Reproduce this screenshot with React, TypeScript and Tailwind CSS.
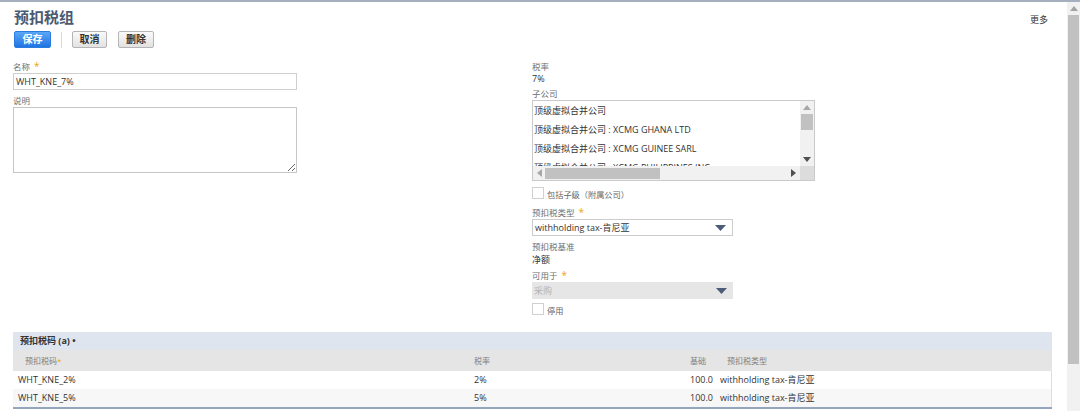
import React from 'react';

// 小工具组件
function Star() {
    return <span className="ml-[4px] text-[10px] leading-none text-[#f0a30a]">*</span>;
}

function Label({ children, req }: { children: React.ReactNode; req?: boolean }) {
    return (
        <div className="h-[12px] text-[8.5px] leading-[12px] text-[#707070]">
            {children}
            {req && <Star />}
        </div>
    );
}

function Arrow({ dir, color }: { dir: 'up' | 'down' | 'left' | 'right'; color: string }) {
    const pts = {
        up: '0,5 4,0 8,5',
        down: '0,0 8,0 4,5',
        left: '5,0 5,8 0,4',
        right: '0,0 0,8 5,4',
    }[dir];
    const w = dir === 'up' || dir === 'down' ? 8 : 5;
    const h = dir === 'up' || dir === 'down' ? 5 : 8;
    return (
        <svg width={w} height={h} viewBox={`0 0 ${w} ${h}`}>
            <polygon points={pts} fill={color} />
        </svg>
    );
}

function Checkbox({ label }: { label: string }) {
    return (
        <div className="flex items-end gap-[3px]">
            <div className="h-[12px] w-[12px] border border-[#d0d0d0] bg-white" />
            <span className="text-[8.2px] leading-[9px] text-[#666]">{label}</span>
        </div>
    );
}

function Select({ value, disabled }: { value: string; disabled?: boolean }) {
    return (
        <div
            className={`flex h-[17px] w-[201px] items-center justify-between pl-[2px] pr-[6px] text-[9px] ${
                disabled ? 'bg-[#e6e6e6] text-[#b3b3b3]' : 'border border-[#cccccc] bg-white text-[#333]'
            }`}
        >
            <span>{value}</span>
            <svg width="11" height="6" viewBox="0 0 11 6">
                <polygon points="0,0 11,0 5.5,6" fill="#4b5d78" />
            </svg>
        </div>
    );
}

export default function App() {
    const subs = [
        '顶级虚拟合并公司',
        '顶级虚拟合并公司 : XCMG GHANA LTD',
        '顶级虚拟合并公司 : XCMG GUINEE SARL',
        '顶级虚拟合并公司 : XCMG PHILIPPINES INC',
    ];

    const rows = [
        { code: 'WHT_KNE_2%', rate: '2%', base: '100.0', type: 'withholding tax-肯尼亚' },
        { code: 'WHT_KNE_5%', rate: '5%', base: '100.0', type: 'withholding tax-肯尼亚' },
    ];

    return (
        <div className="flex h-[411px] w-[1080px] overflow-hidden border-t-2 border-[#a5afc0] bg-white font-['Open_Sans','Noto_Sans_CJK_SC',sans-serif] text-[#333]">
            <div className="flex-1">
                {/* 标题 */}
                <div className="flex justify-between pl-[14px] pr-[19px] pt-[3px]">
                    <h1 className="h-[24px] text-[15px] font-bold leading-[24px] text-[#4a5a70]">预扣税组</h1>
                    <span className="mt-[9px] text-[9px] leading-[12px] text-[#333]">更多</span>
                </div>

                {/* 按钮 */}
                <div className="mt-[2px] flex h-[17px] items-center pl-[14px]">
                    <button className="h-[17px] w-[37px] rounded-[2px] border border-[#2a7de0] bg-gradient-to-b from-[#5aa6f7] to-[#1f74e3] text-[10px] font-bold leading-[15px] text-white">
                        保存
                    </button>
                    <div className="mx-[10px] h-[16px] w-[1px] bg-[#d9d9d9]" />
                    <button className="h-[17px] w-[35px] rounded-[2px] border border-[#b5b5b5] bg-gradient-to-b from-[#fafafa] to-[#e2e2e2] text-[10px] font-bold leading-[15px] text-[#333]">
                        取消
                    </button>
                    <button className="ml-[11px] h-[17px] w-[36px] rounded-[2px] border border-[#b5b5b5] bg-gradient-to-b from-[#fafafa] to-[#e2e2e2] text-[10px] font-bold leading-[15px] text-[#333]">
                        删除
                    </button>
                </div>

                {/* 表单 */}
                <div className="flex pt-[13px]">
                    <div className="w-[532px] pl-[13px]">
                        <Label req>名称</Label>
                        <div className="flex h-[17px] w-[284px] items-center border border-[#cfcfcf] pl-[2px] text-[9px]">
                            WHT_KNE_7%
                        </div>
                        <div className="mt-[5px]">
                            <Label>说明</Label>
                        </div>
                        <textarea className="block h-[66px] w-[284px] border border-[#c6c6c6] outline-none" />
                    </div>

                    <div>
                        <div className="h-[11px] text-[8.5px] leading-[11px] text-[#707070]">税率</div>
                        <div className="h-[13px] text-[9px] leading-[13px]">7%</div>
                        <div className="mt-[3px]">
                            <Label>子公司</Label>
                        </div>
                        <div className="flex h-[81px] w-[283px] flex-col border border-[#cacaca]">
                            <div className="flex min-h-0 flex-1">
                                <div className="flex-1 overflow-hidden">
                                    {subs.map((s) => (
                                        <div key={s} className="h-[19px] whitespace-nowrap pl-[1px] text-[9px] leading-[19px]">
                                            {s}
                                        </div>
                                    ))}
                                </div>
                                <div className="flex w-[14px] flex-col bg-[#f1f1f1]">
                                    <div className="flex h-[13px] items-center justify-center">
                                        <Arrow dir="up" color="#a8a8a8" />
                                    </div>
                                    <div className="mx-[1px] h-[16px] bg-[#c1c1c1]" />
                                    <div className="flex-1" />
                                    <div className="flex h-[13px] items-center justify-center">
                                        <Arrow dir="down" color="#505050" />
                                    </div>
                                </div>
                            </div>
                            <div className="flex h-[14px]">
                                <div className="flex flex-1 items-center bg-[#f1f1f1]">
                                    <div className="flex w-[12px] justify-center">
                                        <Arrow dir="left" color="#a8a8a8" />
                                    </div>
                                    <div className="h-[11px] w-[115px] bg-[#c1c1c1]" />
                                    <div className="flex-1" />
                                    <div className="flex w-[14px] justify-center">
                                        <Arrow dir="right" color="#505050" />
                                    </div>
                                </div>
                                <div className="w-[14px] bg-[#dcdcdc]" />
                            </div>
                        </div>

                        <div className="mt-[6px]">
                            <Checkbox label="包括子级（附属公司）" />
                        </div>

                        <div className="mt-[8px]">
                            <Label req>预扣税类型</Label>
                        </div>
                        <Select value="withholding tax-肯尼亚" />

                        <div className="mt-[5px]">
                            <Label>预扣税基准</Label>
                        </div>
                        <div className="h-[13px] text-[9px] leading-[13px]">净额</div>

                        <div className="mt-[4px]">
                            <Label req>可用于</Label>
                        </div>
                        <Select value="采购" disabled />

                        <div className="mt-[4px]">
                            <Checkbox label="停用" />
                        </div>
                    </div>
                </div>

                {/* 子列表 */}
                <div className="ml-[13px] mt-[17px] w-[1039px] border-b-2 border-[#95a5bd]">
                    <div className="flex h-[18px] items-center bg-[#dfe5ef] pl-[7px]">
                        <span className="text-[9px] font-bold text-[#333]">预扣税码 (a) •</span>
                    </div>
                    <div className="grid h-[21px] grid-cols-[456px_151px_96px_1fr] items-center bg-[#e5e5e5] text-[8px] text-[#808080]">
                        <div className="pl-[12px]">
                            预扣税码<span className="text-[#f0a30a]">*</span>
                        </div>
                        <div className="pl-[5px]">税率</div>
                        <div className="pr-[10px] text-right">基础</div>
                        <div className="pl-[11px]">预扣税类型</div>
                    </div>
                    {rows.map((r, i) => (
                        <div
                            key={r.code}
                            className={`grid h-[18px] grid-cols-[456px_151px_96px_1fr] items-center border-r border-[#dddddd] text-[9px] ${
                                i % 2 ? 'bg-[#f7f7f7]' : 'bg-white'
                            }`}
                        >
                            <div className="pl-[5px]">{r.code}</div>
                            <div className="pl-[5px]">{r.rate}</div>
                            <div className="pr-[3px] text-right">{r.base}</div>
                            <div className="pl-[4px]">{r.type}</div>
                        </div>
                    ))}
                </div>
            </div>

            {/* 页面滚动条 */}
            <div className="flex w-[13px] flex-col bg-[#f1f1f1]">
                <div className="flex h-[13px] items-center justify-center">
                    <Arrow dir="up" color="#a3a3a3" />
                </div>
                <div className="mx-[1px] h-[349px] bg-[#c1c1c1]" />
            </div>
        </div>
    );
}
